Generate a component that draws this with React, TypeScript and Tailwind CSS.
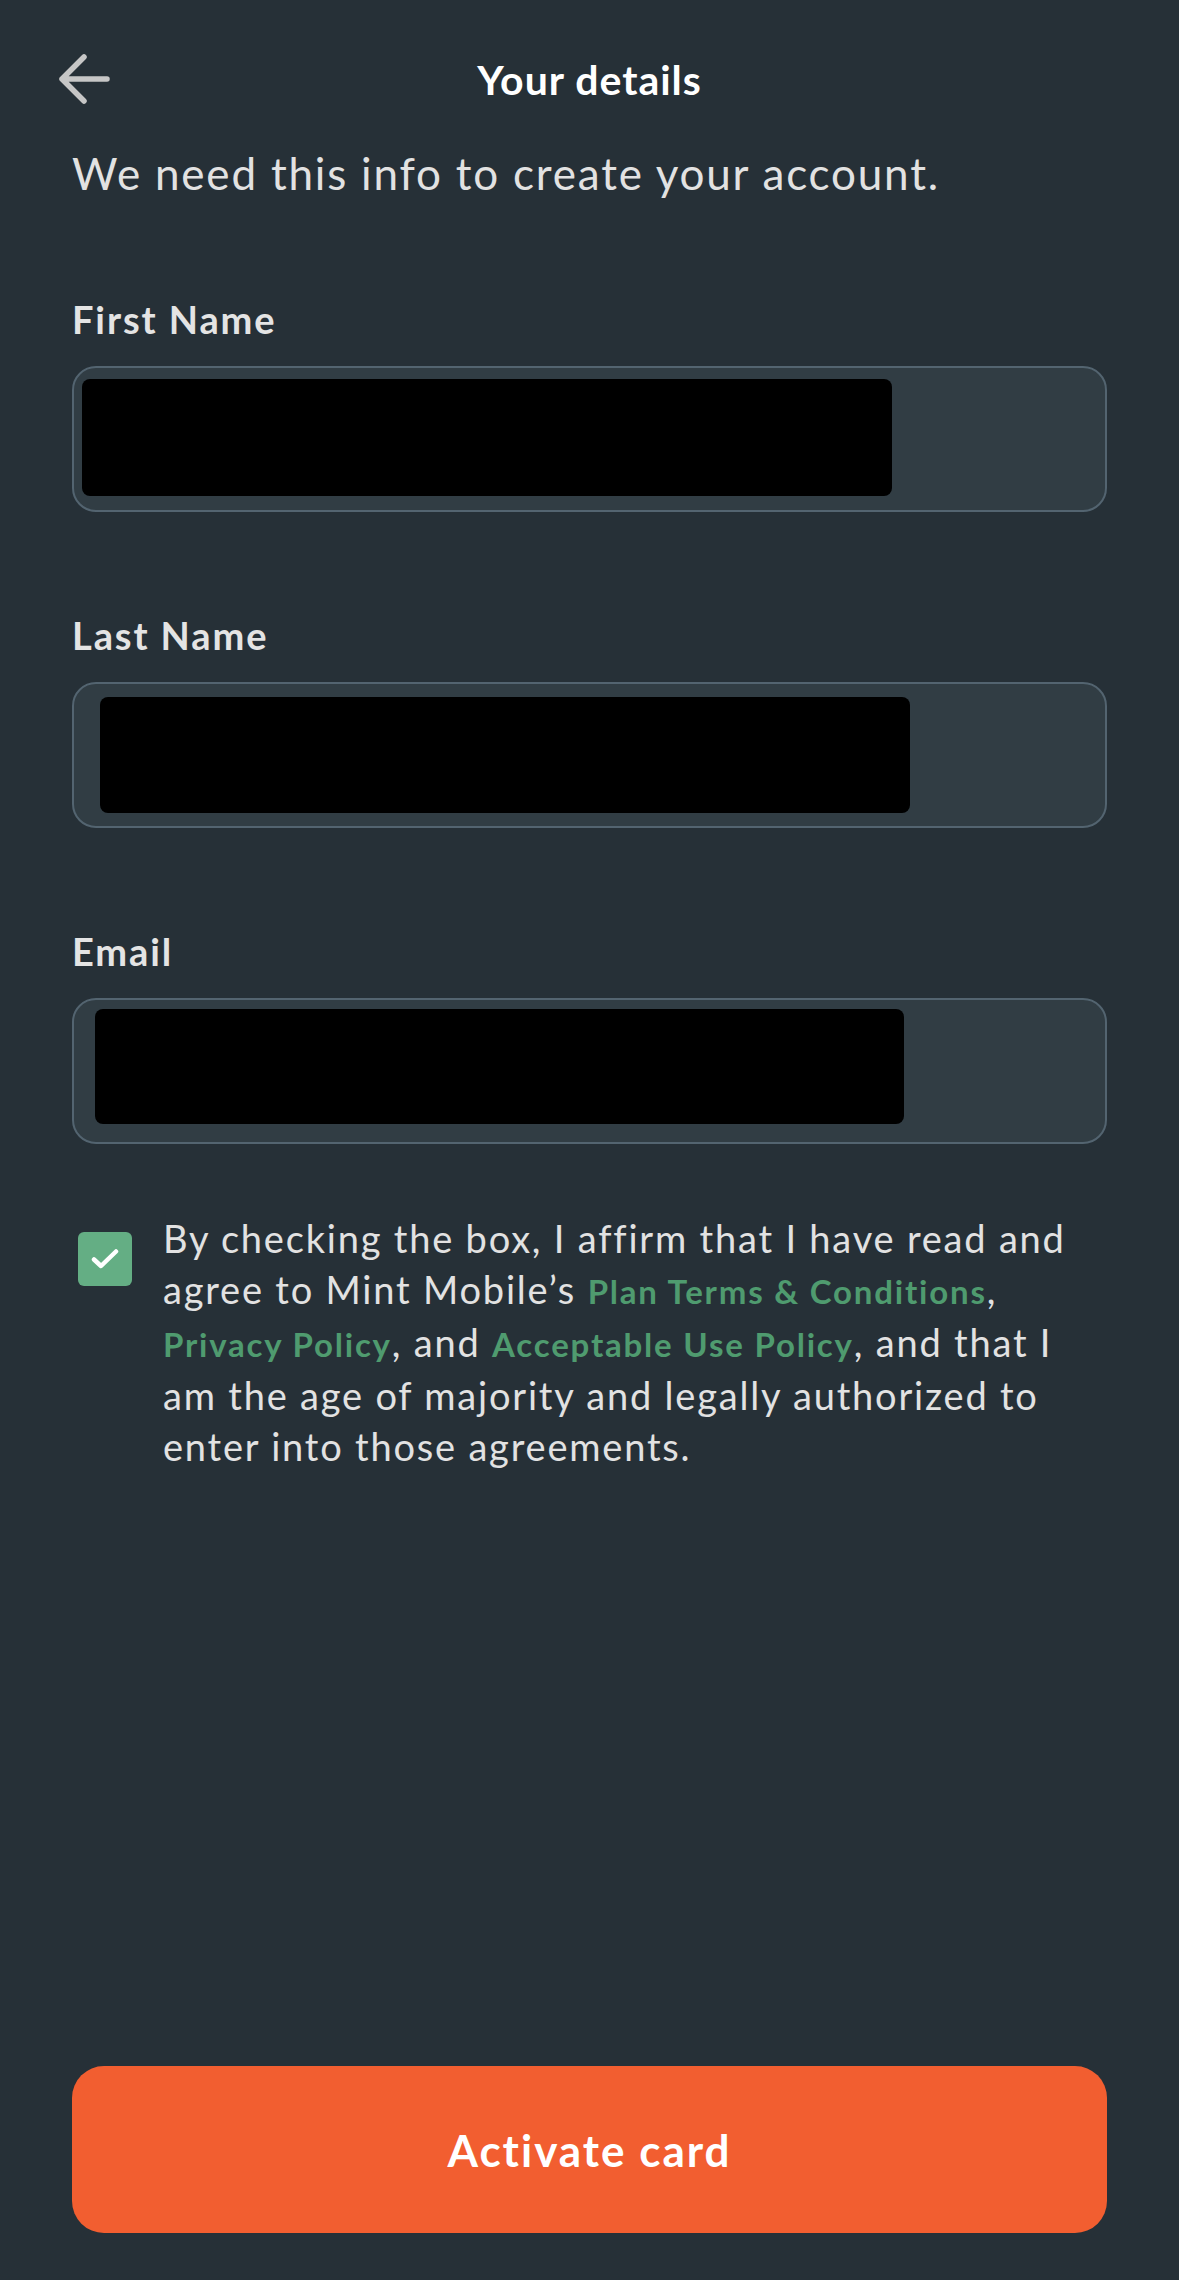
import { useState } from 'react';

interface FieldProps {
  label: string;
  redactLeft: number;
  redactTop: number;
  redactWidth: number;
  redactHeight: number;
}

const FIELDS: FieldProps[] = [
  { label: 'First Name', redactLeft: 8, redactTop: 11, redactWidth: 810, redactHeight: 117 },
  { label: 'Last Name', redactLeft: 26, redactTop: 13, redactWidth: 810, redactHeight: 116 },
  { label: 'Email', redactLeft: 21, redactTop: 9, redactWidth: 809, redactHeight: 115 },
];

function BackArrow() {
  return (
    <svg width="56" height="56" viewBox="0 0 56 56" fill="none" aria-hidden="true">
      <path
        d="M51 28H6M28 6L6 28L28 50"
        stroke="#c6c6c6"
        strokeWidth="5.5"
        strokeLinecap="round"
        strokeLinejoin="round"
      />
    </svg>
  );
}

function Field({ label, redactLeft, redactTop, redactWidth, redactHeight }: FieldProps) {
  return (
    <div className="flex flex-col">
      <label className="text-[38px] font-bold leading-[46px] tracking-[1.9px] text-[#e4e4e4]">{label}</label>
      <div className="relative mt-[24px] h-[146px] rounded-[24px] border-2 border-[#536470] bg-[#313d44]">
        {/* redacted value */}
        <div
          className="absolute rounded-[8px] bg-black"
          style={{ left: redactLeft, top: redactTop, width: redactWidth, height: redactHeight }}
        />
      </div>
    </div>
  );
}

export default function App() {
  const [checked, setChecked] = useState(true);

  return (
    <div className="flex min-h-[2280px] w-full flex-col bg-[#263037] px-[72px] font-['Lato','Noto_Sans',sans-serif] tracking-[1.8px]">
      <header className="grid grid-cols-[56px_1fr_56px] items-center pt-[51px]">
        <button type="button" aria-label="Back" className="-ml-[16px] flex h-[56px] w-[56px] items-center justify-center">
          <BackArrow />
        </button>
        <h1 className="text-center text-[41px] font-bold leading-[49px] tracking-[1px] text-white">Your details</h1>
        <span />
      </header>

      <p className="mt-[40px] text-[44px] leading-[53px] text-[#e2e2e2]">
        We need this info to create your account.
      </p>

      <div className="mt-[96px] flex flex-col gap-[100px]">
        {FIELDS.map((field) => (
          <Field key={field.label} {...field} />
        ))}
      </div>

      <div className="mt-[69px] flex items-start gap-[31px]">
        <button
          type="button"
          onClick={() => setChecked((prev) => !prev)}
          aria-pressed={checked}
          className="ml-[6px] mt-[19px] flex h-[54px] w-[54px] shrink-0 items-center justify-center rounded-[6px] bg-[#64ae84]"
        >
          {checked && (
            <svg width="28" height="22" viewBox="0 0 28 22" fill="none">
              <path d="M3 11.5L10 18L25 3.5" stroke="white" strokeWidth="4.5" strokeLinecap="round" strokeLinejoin="round" />
            </svg>
          )}
        </button>
        <p className="text-[38px] leading-[51px] text-[#e2e2e2]">
          By checking the box, I affirm that I have read and
          <br />
          agree to Mint Mobile’s{' '}
          <a className="text-[33px] font-bold text-[#4f9b6f]">Plan Terms &amp; Conditions</a>,
          <br />
          <a className="text-[33px] font-bold text-[#4f9b6f]">Privacy Policy</a>, and{' '}
          <a className="text-[33px] font-bold text-[#4f9b6f]">Acceptable Use Policy</a>, and that I
          <br />
          am the age of majority and legally authorized to
          <br />
          enter into those agreements.
        </p>
      </div>

      <button
        type="button"
        className="mb-[47px] mt-auto h-[167px] w-full rounded-[32px] bg-[#f25e30] text-[44px] font-bold tracking-[2px] text-white"
      >
        Activate card
      </button>
    </div>
  );
}
